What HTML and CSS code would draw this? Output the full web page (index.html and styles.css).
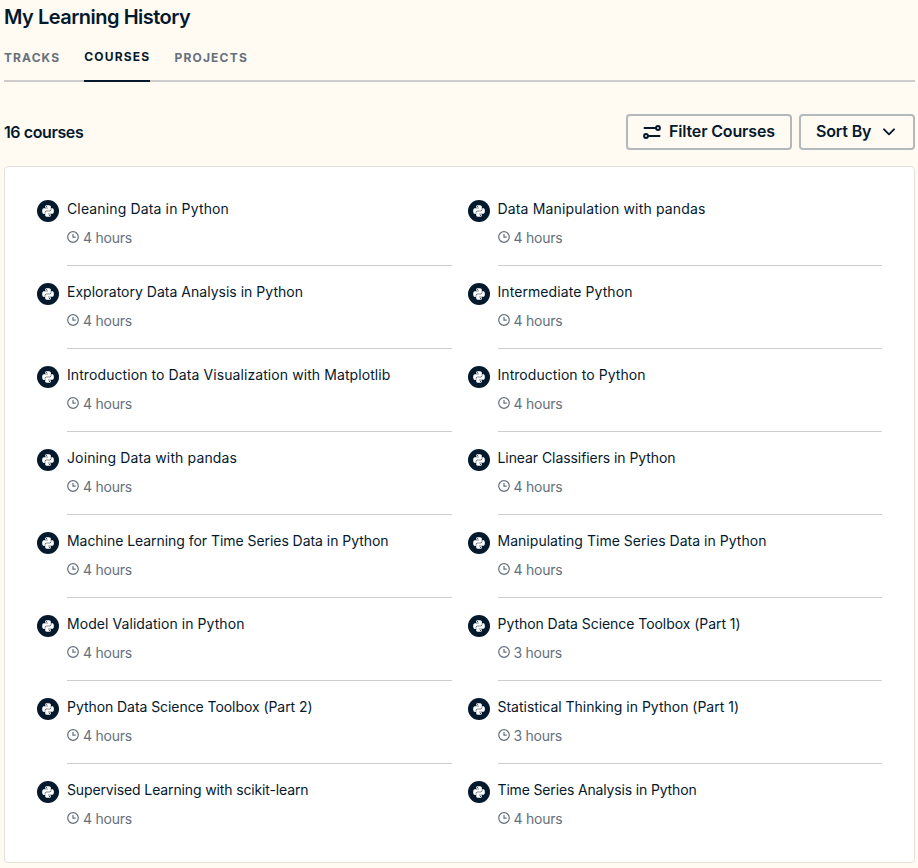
FILE: index.html
```
<!DOCTYPE html>
<html lang="en">
<head>
<meta charset="utf-8">
<title>My Learning History</title>
<link rel="stylesheet" href="styles.css">
</head>
<body>
<svg class="defs" aria-hidden="true">
  <symbol id="python" viewBox="0 0 22 22">
    <circle cx="11" cy="11" r="11" fill="#05192d"/>
    <path transform="translate(5.200 5.200) scale(.485)" fill="#fff" d="M14.250.18l.9.2.73.26.59.3.45.32.34.34.250.34.160.33.1.3.040.260.020.2-.010.130V8.500l-.050.630-.130.550-.210.460-.260.380-.3.310-.330.250-.350.190-.350.140-.330.1-.3.070-.260.040-.210.020H8.770l-.690.050-.590.140-.5.220-.410.270-.330.320-.270.350-.2.360-.150.370-.1.350-.070.320-.040.270-.020.210v3.060H3.170l-.210-.030-.280-.070-.320-.120-.350-.180-.360-.260-.360-.360-.350-.460-.320-.590-.280-.730-.210-.880-.140-1.050-.050-1.230.060-1.220.160-1.040.240-.870.320-.710.360-.570.4-.440.420-.330.420-.240.4-.160.360-.1.320-.050.240-.010h.160l.060.010h8.160v-.830H6.180l-.010-2.750-.020-.370.050-.340.110-.310.170-.280.250-.260.310-.230.380-.2.440-.180.510-.150.580-.120.640-.1.710-.060.770-.040.840-.020 1.270.050zm-6.300 1.980l-.230.330-.080.410.080.410.230.340.330.220.410.090.410-.090.330-.220.230-.340.080-.410-.080-.410-.230-.330-.330-.220-.410-.090-.410.090zm13.090 3.950l.280.060.320.120.350.180.360.270.360.350.350.470.320.590.280.730.210.880.140 1.040.050 1.230-.060 1.230-.160 1.040-.240.860-.320.710-.360.570-.4.450-.420.330-.420.240-.4.160-.360.090-.320.050-.240.020-.160-.010h-8.220v.820h5.840l.010 2.760.020.360-.050.340-.110.310-.170.290-.250.250-.310.240-.380.2-.440.170-.510.150-.580.130-.640.090-.710.070-.770.040-.840.010-1.270-.040-1.070-.140-.9-.2-.730-.250-.590-.3-.450-.330-.340-.340-.250-.340-.160-.330-.1-.3-.040-.250-.020-.2.010-.130v-5.340l.050-.640.130-.540.210-.460.260-.380.3-.320.330-.240.350-.2.350-.140.330-.1.3-.060.260-.040.210-.020.130-.010h5.840l.690-.050.590-.140.5-.210.410-.280.330-.320.270-.350.2-.360.150-.360.1-.350.070-.320.040-.280.020-.210V6.070h2.090l.140.010zm-6.470 14.250l-.230.330-.080.410.080.410.230.330.330.230.410.080.410-.080.330-.230.230-.330.080-.410-.080-.410-.230-.330-.330-.230-.410-.080-.410.080z"/>
  </symbol>
  <symbol id="clock" viewBox="0 0 12 12">
    <g fill="none" stroke="currentColor" stroke-width="1.2"><circle cx="6" cy="6" r="5.300"/><path d="M6 3v3.200h2.700"/></g>
  </symbol>
</svg>
<main>
  <h1>My Learning History</h1>
  <nav class="tabs">
    <a class="tab">TRACKS</a>
    <a class="tab active">COURSES</a>
    <a class="tab">PROJECTS</a>
  </nav>
  <div class="toolbar">
    <h2>16 courses</h2>
    <button class="btn filter"><svg width="18" height="14" viewBox="0 0 18 14" fill="none" stroke="currentColor" stroke-width="2"><path d="M1.500 3h11M5.500 11h11" stroke-linecap="round"/><circle cx="15" cy="3" r="1.900"/><circle cx="3" cy="11" r="1.900"/></svg><span>Filter Courses</span></button>
    <button class="btn sort"><span>Sort By</span><svg width="12" height="8" viewBox="0 0 12 8" fill="none" stroke="currentColor" stroke-width="1.900" stroke-linecap="round" stroke-linejoin="round"><path d="M1 1.300l5 5 5-5"/></svg></button>
  </div>
  <section class="card" id="courses"></section>
</main>
<script src="courses.js"></script>
</body>
</html>
```
FILE: styles.css
```
* { box-sizing: border-box; }
body { margin: 0; background: #fffbf3; color: #05192d; font-family: "Inter", sans-serif; }
.defs { display: block; width: 0; height: 0; }
main { padding: 4px 3px 0 4px; }
h1 { margin: 0; font-size: 20px; line-height: 26px; font-weight: 600; letter-spacing: -0.5px; }
.tabs { display: flex; gap: 24px; height: 52px; border-bottom: 2px solid #cdccca; }
.tab { height: 52px; padding-top: 18px; font-size: 12px; line-height: 20px; font-weight: 700; letter-spacing: 1.2px; color: #65707c; }
.tab:first-child { letter-spacing: 1.1px; }
.tab.active { padding-top: 17px; color: #05192d; border-bottom: 2px solid #05192d; }
.toolbar { display: flex; align-items: center; height: 36px; margin-top: 32px; }
h2 { flex: 1; margin: 0; font-size: 16px; font-weight: 600; letter-spacing: -0.4px; }
.btn { display: flex; align-items: center; height: 36px; padding: 0 0 2px 15px; border: 2px solid #b4b8ba; border-radius: 4px; background: transparent; color: #05192d; font: 600 16px "Inter", sans-serif; letter-spacing: -0.16px; white-space: nowrap; }
.btn svg { flex: none; }
.filter { width: 166px; margin-right: 7px; }
.filter svg { margin: 2px 8px 0 0; }
.sort { width: 116px; }
.sort svg { margin: 2px 0 0 12px; }
.card { display: grid; grid-template-columns: 1fr 1fr; column-gap: 16px; margin-top: 16px; padding: 16px 32px 15px; border: 1px solid #e5e1da; border-radius: 4px; background: #fff; }
.course { display: flex; height: 83px; padding-top: 17px; }
.badge { flex: none; width: 22px; height: 22px; margin-right: 8px; }
.info { flex: 1; border-bottom: 1px solid #cdcecf; }
.course:nth-last-child(-n+2) .info { border-bottom-color: transparent; }
.name { height: 19px; font-size: 14px; line-height: 18px; white-space: nowrap; }
.name span { display: inline-block; }
.meta { display: flex; align-items: center; margin-top: 9px; font-size: 14px; line-height: 20px; letter-spacing: -0.25px; color: #65707c; }
.meta svg { width: 12px; height: 12px; margin: -2px 4px 0 0; }
```
FILE: courses.js
```
// name, hours, width of the title line in pixels
const courses = [
  ["Cleaning Data in Python", 4, 162], ["Data Manipulation with pandas", 4, 208],
  ["Exploratory Data Analysis in Python", 4, 236], ["Intermediate Python", 4, 135],
  ["Introduction to Data Visualization with Matplotlib", 4, 323.5], ["Introduction to Python", 4, 148],
  ["Joining Data with pandas", 4, 170], ["Linear Classifiers in Python", 4, 178],
  ["Machine Learning for Time Series Data in Python", 4, 321.5], ["Manipulating Time Series Data in Python", 4, 269],
  ["Model Validation in Python", 4, 177.5], ["Python Data Science Toolbox (Part 1)", 3, 243],
  ["Python Data Science Toolbox (Part 2)", 4, 245.5], ["Statistical Thinking in Python (Part 1)", 3, 241.5],
  ["Supervised Learning with scikit-learn", 4, 241.5], ["Time Series Analysis in Python", 4, 199]
];
document.getElementById("courses").innerHTML = courses.map(([name, hours]) => `
  <article class="course">
    <svg class="badge"><use href="#python"/></svg>
    <div class="info">
      <div class="name"><span>${name}</span></div>
      <div class="meta"><svg><use href="#clock"/></svg><span>${hours} hours</span></div>
    </div>
  </article>`).join("");

// Track each title so that it fills its line width.
document.querySelectorAll(".name span").forEach((el, i) => {
  const spare = courses[i][2] - el.getBoundingClientRect().width;
  el.style.letterSpacing = spare / courses[i][0].length + "px";
});
```
